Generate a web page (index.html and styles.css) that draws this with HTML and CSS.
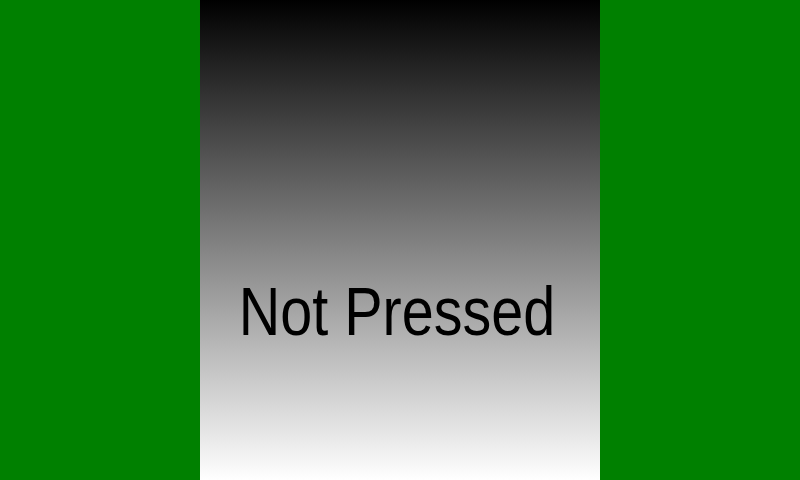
FILE: index.html
```html
<!DOCTYPE html>
<html>
<head>
<meta charset="utf-8">
<link rel="stylesheet" href="styles.css">
</head>
<body>
<div class="screen">
  <div class="button">
    <span class="label">Not Pressed</span>
  </div>
</div>
</body>
</html>
```
FILE: styles.css
```css
html, body {
  margin: 0;
  padding: 0;
}
.screen {
  width: 800px;
  height: 480px;
  background: #008000;
  display: flex;
  justify-content: center;
}
.button {
  width: 400px;
  height: 480px;
  background: linear-gradient(to bottom, #000000, #ffffff);
  display: flex;
  justify-content: center;
  padding-top: 279px;
  padding-right: 6px;
  box-sizing: border-box;
}
.label {
  font-family: "Liberation Sans", Arial, sans-serif;
  font-size: 57.5px;
  line-height: 64px;
  color: #000;
  transform: scaleY(1.2);
  height: 64px;
}
```
